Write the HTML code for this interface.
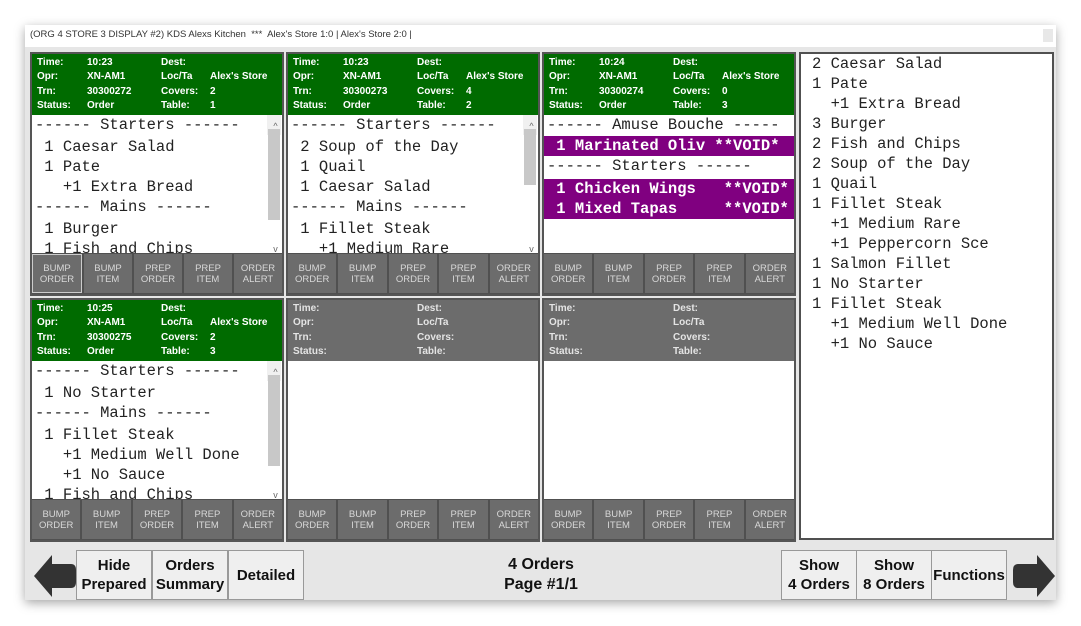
<!DOCTYPE html>
<html><head><meta charset="utf-8"><style>
*{margin:0;padding:0;box-sizing:border-box}
body{width:1081px;height:626px;background:#fff;position:relative;overflow:hidden;font-family:"Liberation Sans",sans-serif}
.win{position:absolute;left:25px;top:25px;width:1031px;height:575px;background:#e6e6e6;box-shadow:0 3px 10px rgba(0,0,0,.35)}
.title{position:absolute;left:0;top:0;width:1031px;height:22px;background:#fff;font-size:9.5px;color:#333;padding:4px 0 0 5px;white-space:pre}
.xbtn{position:absolute;right:3px;top:4px;width:10px;height:13px;background:#e8e8e8}
.p{position:absolute;width:254px;height:244px;background:#505050;border:2px solid #555}
.hd{position:absolute;left:0;top:0;width:250px;height:61px;background:#006b00;color:#fff;font-size:10px;font-weight:bold}
.hd.g{background:#6c6c6c;color:#e4e4e4}
.hd span{position:absolute}
.ct{position:absolute;left:0;top:61px;width:250px;height:138px;background:#fff;overflow:hidden;font-family:"Liberation Mono",monospace;font-size:15.5px;color:#222}
.ct div{height:20px;line-height:20px;white-space:pre;padding-left:3px}
.ct .v{background:#800080;color:#fff;font-weight:bold;margin:0}
.sb{position:absolute;right:1px;top:0;width:14px;height:138px;background:#f0f0f0}
.sb .t{position:absolute;left:1px;top:14px;width:12px;height:91px;background:#c8c8c8}
.sb .a{position:absolute;left:0;width:14px;text-align:center;font-size:9px;color:#666;font-family:"Liberation Sans"}
.bt{position:absolute;left:0;top:199px;width:250px;height:41px;display:flex;background:#505050;gap:2px;padding:1px 0}
.bt div{flex:1;background:#6c6c6c;color:#d8d8d8;font-size:9.5px;text-align:center;line-height:11px;padding-top:9px}
.bt div.sel{border:1px solid #ccc;padding-top:8px}
.rp{position:absolute;left:774px;top:27px;width:255px;height:488px;background:#fff;border:2px solid #505050;font-family:"Liberation Mono",monospace;font-size:15.5px;color:#222}
.rp div{height:20px;line-height:20px;white-space:pre;padding-left:11px}
.btn{position:absolute;top:525px;height:50px;background:#efefef;border:1px solid #999;font-weight:bold;font-size:15px;text-align:center;color:#111;display:flex;align-items:center;justify-content:center;line-height:19px}
</style></head><body>
<div class="win">
<div class="title">(ORG 4 STORE 3 DISPLAY #2) KDS Alexs Kitchen  ***  Alex's Store 1:0 | Alex's Store 2:0 |</div>
<div class="xbtn"></div>

<div class="p" style="left:5px;top:27px">
<div class="hd"><span style="left:5px;top:3px">Time:</span><span style="left:55px;top:3px">10:23</span><span style="left:129px;top:3px">Dest:</span>
<span style="left:5px;top:17px">Opr:</span><span style="left:55px;top:17px">XN-AM1</span><span style="left:129px;top:17px">Loc/Ta</span><span style="left:178px;top:17px">Alex's Store</span>
<span style="left:5px;top:32px">Trn:</span><span style="left:55px;top:32px">30300272</span><span style="left:129px;top:32px">Covers:</span><span style="left:178px;top:32px">2</span>
<span style="left:5px;top:46px">Status:</span><span style="left:55px;top:46px">Order</span><span style="left:129px;top:46px">Table:</span><span style="left:178px;top:46px">1</span></div>
<div class="ct"><div style="height:22px">------ Starters ------</div><div> 1 Caesar Salad</div><div> 1 Pate</div><div>   +1 Extra Bread</div><div style="height:22px">------ Mains ------</div><div> 1 Burger</div><div> 1 Fish and Chips</div>
<div class="sb"><div class="a" style="top:1px">^</div><div class="t"></div><div class="a" style="top:124px">v</div></div></div>
<div class="bt"><div class="sel">BUMP<br>ORDER</div><div>BUMP<br>ITEM</div><div>PREP<br>ORDER</div><div>PREP<br>ITEM</div><div>ORDER<br>ALERT</div></div>
</div>

<div class="p" style="left:261px;top:27px">
<div class="hd"><span style="left:5px;top:3px">Time:</span><span style="left:55px;top:3px">10:23</span><span style="left:129px;top:3px">Dest:</span>
<span style="left:5px;top:17px">Opr:</span><span style="left:55px;top:17px">XN-AM1</span><span style="left:129px;top:17px">Loc/Ta</span><span style="left:178px;top:17px">Alex's Store</span>
<span style="left:5px;top:32px">Trn:</span><span style="left:55px;top:32px">30300273</span><span style="left:129px;top:32px">Covers:</span><span style="left:178px;top:32px">4</span>
<span style="left:5px;top:46px">Status:</span><span style="left:55px;top:46px">Order</span><span style="left:129px;top:46px">Table:</span><span style="left:178px;top:46px">2</span></div>
<div class="ct"><div style="height:22px">------ Starters ------</div><div> 2 Soup of the Day</div><div> 1 Quail</div><div> 1 Caesar Salad</div><div style="height:22px">------ Mains ------</div><div> 1 Fillet Steak</div><div>   +1 Medium Rare</div>
<div class="sb"><div class="a" style="top:1px">^</div><div class="t" style="height:56px"></div><div class="a" style="top:124px">v</div></div></div>
<div class="bt"><div>BUMP<br>ORDER</div><div>BUMP<br>ITEM</div><div>PREP<br>ORDER</div><div>PREP<br>ITEM</div><div>ORDER<br>ALERT</div></div>
</div>

<div class="p" style="left:517px;top:27px">
<div class="hd"><span style="left:5px;top:3px">Time:</span><span style="left:55px;top:3px">10:24</span><span style="left:129px;top:3px">Dest:</span>
<span style="left:5px;top:17px">Opr:</span><span style="left:55px;top:17px">XN-AM1</span><span style="left:129px;top:17px">Loc/Ta</span><span style="left:178px;top:17px">Alex's Store</span>
<span style="left:5px;top:32px">Trn:</span><span style="left:55px;top:32px">30300274</span><span style="left:129px;top:32px">Covers:</span><span style="left:178px;top:32px">0</span>
<span style="left:5px;top:46px">Status:</span><span style="left:55px;top:46px">Order</span><span style="left:129px;top:46px">Table:</span><span style="left:178px;top:46px">3</span></div>
<div class="ct"><div style="height:21px">------ Amuse Bouche -----</div><div class="v"> 1 Marinated Oliv **VOID*</div><div style="height:23px;line-height:20px">------ Starters ------</div><div class="v"> 1 Chicken Wings   **VOID*</div><div class="v"> 1 Mixed Tapas     **VOID*</div></div>
<div class="bt"><div>BUMP<br>ORDER</div><div>BUMP<br>ITEM</div><div>PREP<br>ORDER</div><div>PREP<br>ITEM</div><div>ORDER<br>ALERT</div></div>
</div>

<div class="p" style="left:5px;top:273px">
<div class="hd"><span style="left:5px;top:3px">Time:</span><span style="left:55px;top:3px">10:25</span><span style="left:129px;top:3px">Dest:</span>
<span style="left:5px;top:17px">Opr:</span><span style="left:55px;top:17px">XN-AM1</span><span style="left:129px;top:17px">Loc/Ta</span><span style="left:178px;top:17px">Alex's Store</span>
<span style="left:5px;top:32px">Trn:</span><span style="left:55px;top:32px">30300275</span><span style="left:129px;top:32px">Covers:</span><span style="left:178px;top:32px">2</span>
<span style="left:5px;top:46px">Status:</span><span style="left:55px;top:46px">Order</span><span style="left:129px;top:46px">Table:</span><span style="left:178px;top:46px">3</span></div>
<div class="ct"><div style="height:22px">------ Starters ------</div><div> 1 No Starter</div><div style="height:22px">------ Mains ------</div><div> 1 Fillet Steak</div><div>   +1 Medium Well Done</div><div>   +1 No Sauce</div><div> 1 Fish and Chips</div>
<div class="sb"><div class="a" style="top:1px">^</div><div class="t"></div><div class="a" style="top:124px">v</div></div></div>
<div class="bt"><div>BUMP<br>ORDER</div><div>BUMP<br>ITEM</div><div>PREP<br>ORDER</div><div>PREP<br>ITEM</div><div>ORDER<br>ALERT</div></div>
</div>

<div class="p" style="left:261px;top:273px">
<div class="hd g"><span style="left:5px;top:3px">Time:</span><span style="left:129px;top:3px">Dest:</span><span style="left:5px;top:17px">Opr:</span><span style="left:129px;top:17px">Loc/Ta</span><span style="left:5px;top:32px">Trn:</span><span style="left:129px;top:32px">Covers:</span><span style="left:5px;top:46px">Status:</span><span style="left:129px;top:46px">Table:</span></div>
<div class="ct"></div>
<div class="bt"><div>BUMP<br>ORDER</div><div>BUMP<br>ITEM</div><div>PREP<br>ORDER</div><div>PREP<br>ITEM</div><div>ORDER<br>ALERT</div></div>
</div>

<div class="p" style="left:517px;top:273px">
<div class="hd g"><span style="left:5px;top:3px">Time:</span><span style="left:129px;top:3px">Dest:</span><span style="left:5px;top:17px">Opr:</span><span style="left:129px;top:17px">Loc/Ta</span><span style="left:5px;top:32px">Trn:</span><span style="left:129px;top:32px">Covers:</span><span style="left:5px;top:46px">Status:</span><span style="left:129px;top:46px">Table:</span></div>
<div class="ct"></div>
<div class="bt"><div>BUMP<br>ORDER</div><div>BUMP<br>ITEM</div><div>PREP<br>ORDER</div><div>PREP<br>ITEM</div><div>ORDER<br>ALERT</div></div>
</div>

<div class="rp">
<div>2 Caesar Salad</div><div>1 Pate</div><div>  +1 Extra Bread</div><div>3 Burger</div><div>2 Fish and Chips</div><div>2 Soup of the Day</div><div>1 Quail</div><div>1 Fillet Steak</div><div>  +1 Medium Rare</div><div>  +1 Peppercorn Sce</div><div>1 Salmon Fillet</div><div>1 No Starter</div><div>1 Fillet Steak</div><div>  +1 Medium Well Done</div><div>  +1 No Sauce</div>
</div>

<svg style="position:absolute;left:8px;top:528px" width="44" height="46" viewBox="0 0 44 46"><path d="M1 23 L19 2 L19 11 L38 11 Q43 11 43 17 L43 29 Q43 35 38 35 L19 35 L19 44 Z" fill="#333"/></svg>
<div class="btn" style="left:51px;width:76px">Hide<br>Prepared</div>
<div class="btn" style="left:127px;width:76px">Orders<br>Summary</div>
<div class="btn" style="left:203px;width:76px">Detailed</div>
<div style="position:absolute;left:416px;top:530px;width:200px;text-align:center;font-weight:bold;font-size:16px;line-height:20px;color:#111">4 Orders<br>Page #1/1</div>
<div class="btn" style="left:756px;width:76px">Show<br>4 Orders</div>
<div class="btn" style="left:831px;width:76px">Show<br>8 Orders</div>
<div class="btn" style="left:906px;width:76px">Functions</div>
<svg style="position:absolute;left:987px;top:528px" width="44" height="46" viewBox="0 0 44 46"><path d="M43 23 L25 2 L25 11 L6 11 Q1 11 1 17 L1 29 Q1 35 6 35 L25 35 L25 44 Z" fill="#333"/></svg>
</div>
</body></html>
